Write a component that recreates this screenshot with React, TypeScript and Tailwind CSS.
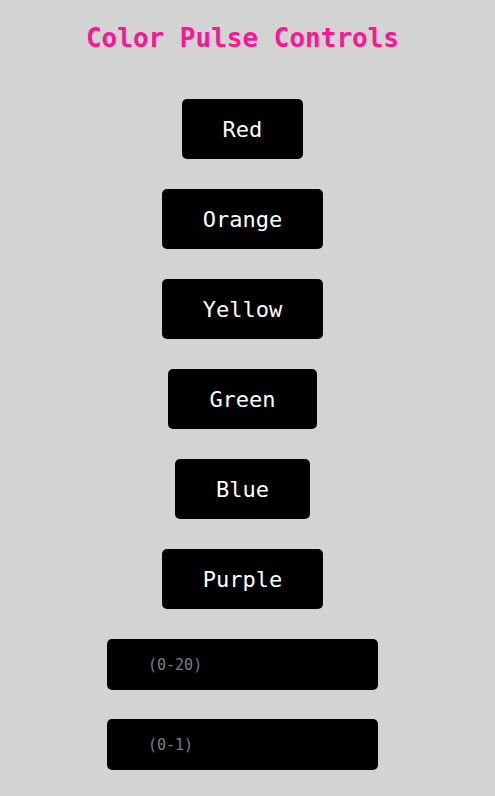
const colors = ["Red", "Orange", "Yellow", "Green", "Blue", "Purple"];

export default function App() {
  return (
    <div className="min-h-screen w-full bg-[#d3d3d3] font-['DejaVu_Sans_Mono',monospace]">
      <div className="flex w-[485px] flex-col items-center pt-[22px]">
        <h1 className="text-[26px] font-bold leading-[32px] text-[#ff1493]">Color Pulse Controls</h1>
        <div className="mt-[45px] flex flex-col items-center gap-[30px]">
          {colors.map((c) => (
            <button
              key={c}
              className="h-[60px] rounded-[5px] bg-black px-[41px] text-[22px] text-white"
            >
              {c}
            </button>
          ))}
        </div>
        <div className="mt-[30px] flex flex-col gap-[29px]">
          <input
            placeholder="(0-20)"
            className="h-[51px] w-[271px] rounded-[5px] bg-black pl-[41px] text-[15px] text-white outline-none placeholder:text-[#7a7d84]"
          />
          <input
            placeholder="(0-1)"
            className="h-[51px] w-[271px] rounded-[5px] bg-black pl-[41px] text-[15px] text-white outline-none placeholder:text-[#7a7d84]"
          />
        </div>
      </div>
    </div>
  );
}
